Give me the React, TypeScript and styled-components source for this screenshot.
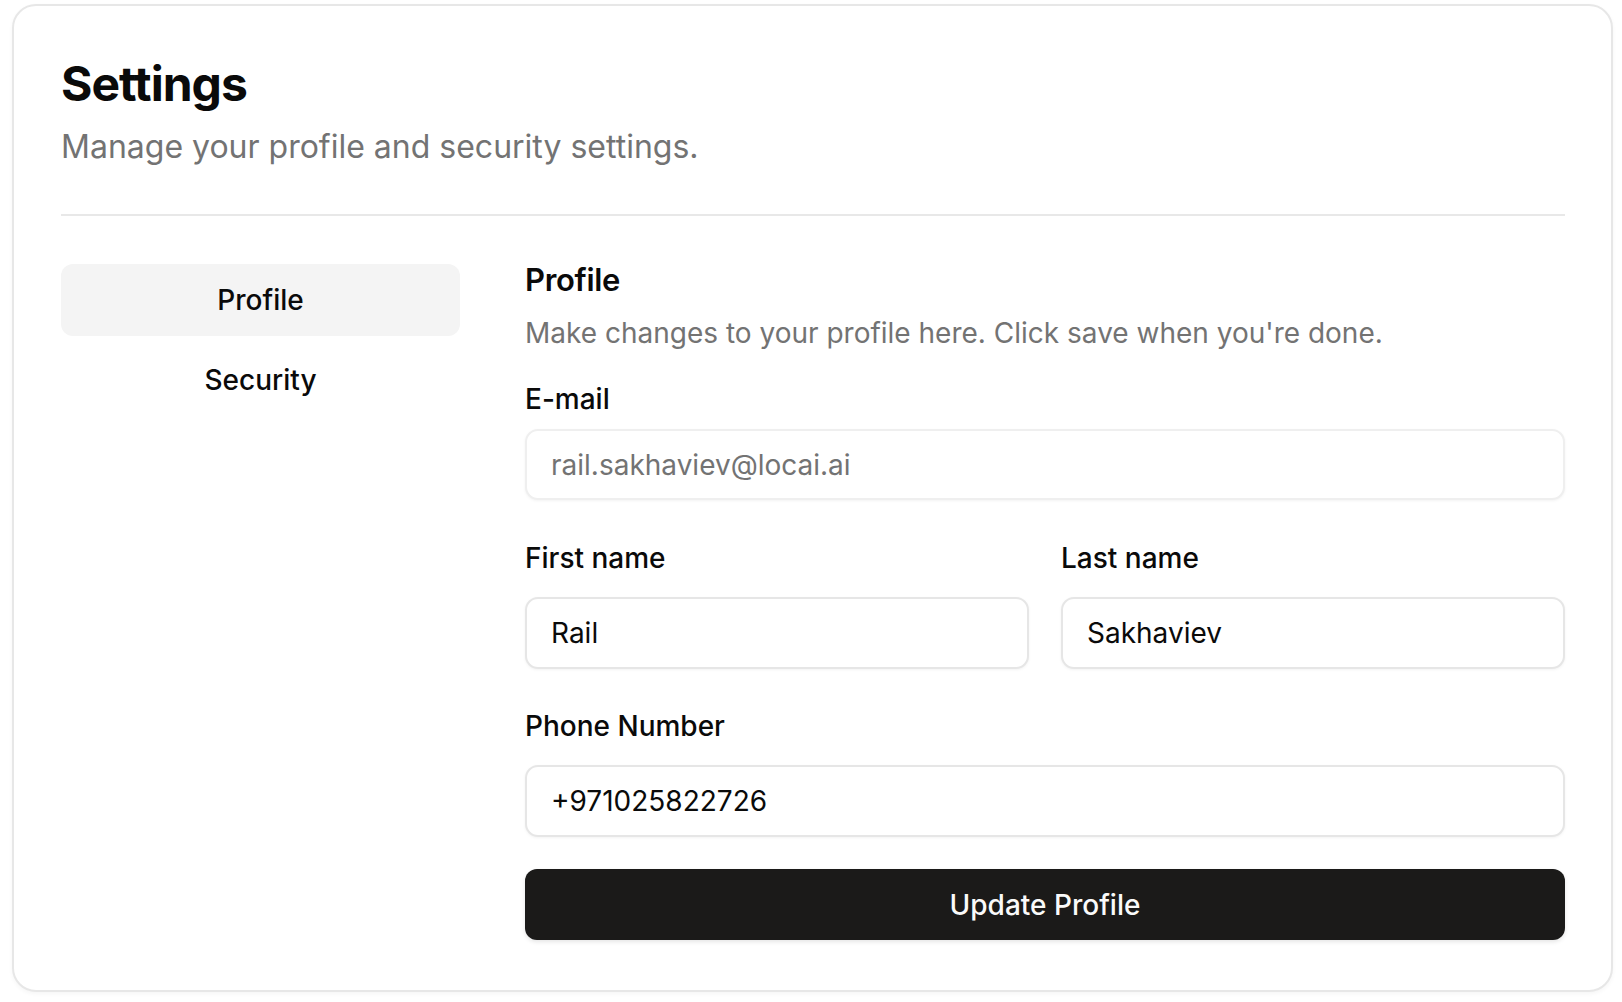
import React from "react";
import styled, { createGlobalStyle } from "styled-components";

const GlobalStyle = createGlobalStyle`
  html, body { margin: 0; padding: 0; background: #ffffff; }
  body { font-family: Inter, "Noto Sans", "Liberation Sans", sans-serif; color: #0a0a0a; -webkit-font-smoothing: antialiased; }
  * { box-sizing: border-box; }
`;

const Page = styled.div`
  padding: 4px 9px 8px 12px;
`;

const Card = styled.div`
  border: 2px solid #e7e7e7;
  border-radius: 24px;
  background: #ffffff;
  box-shadow: 0 2px 4px rgba(0, 0, 0, 0.04);
  padding: 50px 46px 50px 47px;
`;

const Header = styled.header`
  display: flex;
  flex-direction: column;
  gap: 16px;
`;

const Title = styled.h1`
  margin: 0;
  font-size: 48px;
  line-height: 56px;
  font-weight: 700;
  letter-spacing: -0.02em;
`;

const Subtitle = styled.p`
  margin: 0;
  font-size: 32px;
  line-height: 38px;
  color: #737373;
`;

const Separator = styled.hr`
  border: none;
  height: 2px;
  background: #e8e8e8;
  margin: 48px 0 46px;
`;

const Body = styled.div`
  display: grid;
  grid-template-columns: 399px 1fr;
  column-gap: 65px;
  align-items: start;
`;

const TabList = styled.nav`
  display: flex;
  flex-direction: column;
  gap: 8px;
  padding-top: 2px;
`;

const Tab = styled.button<{ $active?: boolean }>`
  height: 72px;
  border: none;
  border-radius: 12px;
  background: ${(p) => (p.$active ? "#f4f4f4" : "transparent")};
  font-family: inherit;
  font-size: 28px;
  font-weight: 500;
  color: #0a0a0a;
  cursor: pointer;
`;

const Section = styled.section`
  display: flex;
  flex-direction: column;
`;

const SectionTitle = styled.h2`
  margin: 0;
  font-size: 31px;
  line-height: 36px;
  font-weight: 600;
  letter-spacing: -0.01em;
`;

const SectionDesc = styled.p`
  margin: 17px 0 0;
  font-size: 28px;
  line-height: 36px;
  color: #737373;
`;

const Field = styled.div<{ $top: number; $gap: number }>`
  display: flex;
  flex-direction: column;
  gap: ${(p) => p.$gap}px;
  margin-top: ${(p) => p.$top}px;
  min-width: 0;
`;

const Row = styled.div`
  display: grid;
  grid-template-columns: 1fr 1fr;
  column-gap: 32px;
  margin-top: 40px;
`;

const Label = styled.label`
  font-size: 28px;
  line-height: 36px;
  font-weight: 500;
  color: #0a0a0a;
`;

const Input = styled.input<{ $h: number }>`
  height: ${(p) => p.$h}px;
  width: 100%;
  border: 2px solid #e6e6e6;
  border-radius: 13px;
  padding: 0 24px;
  font-family: inherit;
  font-size: 28px;
  color: #0a0a0a;
  background: #ffffff;
  box-shadow: 0 1px 3px rgba(0, 0, 0, 0.05);
  outline: none;
  &:disabled {
    color: #737373;
    border-color: #efefef;
    -webkit-text-fill-color: #737373;
    opacity: 1;
  }
`;

const PrimaryButton = styled.button`
  margin-top: 32px;
  height: 71px;
  border: none;
  border-radius: 12px;
  background: #1b1a19;
  color: #fafafa;
  font-family: inherit;
  font-size: 28px;
  font-weight: 500;
  box-shadow: 0 2px 4px rgba(0, 0, 0, 0.1);
  cursor: pointer;
`;

export default function App() {
  return (
    <>
      <GlobalStyle />
      <Page>
        <Card>
          <Header>
            <Title>Settings</Title>
            <Subtitle>Manage your profile and security settings.</Subtitle>
          </Header>
          <Separator />
          <Body>
            <TabList>
              <Tab $active>Profile</Tab>
              <Tab>Security</Tab>
            </TabList>
            <Section>
              <SectionTitle>Profile</SectionTitle>
              <SectionDesc>Make changes to your profile here. Click save when you're done.</SectionDesc>
              <Field $top={30} $gap={12}>
                <Label htmlFor="email">E-mail</Label>
                <Input $h={71} id="email" value="rail.sakhaviev@locai.ai" disabled readOnly />
              </Field>
              <Row>
                <Field $top={0} $gap={21}>
                  <Label htmlFor="first">First name</Label>
                  <Input $h={72} id="first" defaultValue="Rail" />
                </Field>
                <Field $top={0} $gap={21}>
                  <Label htmlFor="last">Last name</Label>
                  <Input $h={72} id="last" defaultValue="Sakhaviev" />
                </Field>
              </Row>
              <Field $top={39} $gap={21}>
                <Label htmlFor="phone">Phone Number</Label>
                <Input $h={72} id="phone" defaultValue="+971025822726" />
              </Field>
              <PrimaryButton>Update Profile</PrimaryButton>
            </Section>
          </Body>
        </Card>
      </Page>
    </>
  );
}
